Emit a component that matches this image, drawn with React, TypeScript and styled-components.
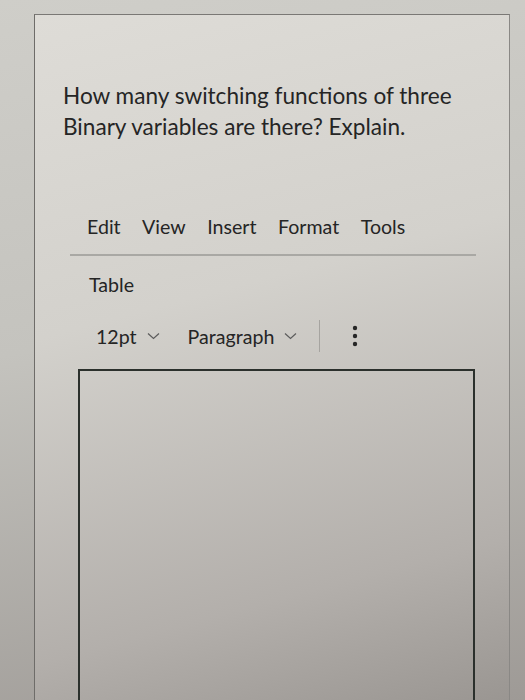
import styled, { createGlobalStyle } from 'styled-components';

const GlobalStyle = createGlobalStyle`
  html, body {
    margin: 0;
    padding: 0;
  }
  body {
    width: 525px;
    height: 700px;
    overflow: hidden;
    font-family: Lato, 'Open Sans', 'Liberation Sans', sans-serif;
    background: linear-gradient(170deg, #cfcec9 0%, #c4c3be 45%, #9e9a96 100%);
  }
`;

const menuItems = ['Edit', 'View', 'Insert', 'Format', 'Tools'];

const Chevron = () => (
  <svg width="13" height="8" viewBox="0 0 13 8" fill="none">
    <path d="M1 1.5l5.5 5L12 1.5" stroke="#5c5c5c" strokeWidth="1.2" />
  </svg>
);

const Kebab = () => (
  <svg width="6" height="22" viewBox="0 0 6 22">
    <circle cx="3" cy="3" r="2.2" fill="#262626" />
    <circle cx="3" cy="11" r="2.2" fill="#262626" />
    <circle cx="3" cy="19" r="2.2" fill="#262626" />
  </svg>
);

const App = () => {
  return (
    <>
      <GlobalStyle />
      <Page>
        <Card>
          {/* question */}
          <Question>
            How many switching functions of three
            <br />
            Binary variables are there? Explain.
          </Question>
          <Editor>
            <MenuBar>
              {menuItems.map(item => (
                <MenuItem key={item}>{item}</MenuItem>
              ))}
            </MenuBar>
            <ToolRow>
              <ToolLabel>Table</ToolLabel>
            </ToolRow>
            <ToolRow>
              <Dropdown>
                12pt <Chevron />
              </Dropdown>
              <Dropdown wide>
                Paragraph <Chevron />
              </Dropdown>
              <Separator />
              <MoreButton>
                <Kebab />
              </MoreButton>
            </ToolRow>
            <AnswerBox />
          </Editor>
        </Card>
      </Page>
    </>
  );
};

export default App;

const Page = styled.div`
  width: 525px;
  height: 700px;
  box-sizing: border-box;
  padding: 14px 15px 0 34px;
  overflow: hidden;
`;

const Card = styled.div`
  height: 100%;
  box-sizing: border-box;
  padding: 65px 0 0 28px;
  border-left: 1px solid #6e6c69;
  border-top: 1px solid #7a7875;
  border-right: 1px solid #8a8885;
  background: linear-gradient(165deg, #dedcd7 0%, #d3d1cc 40%, #b3afab 80%, #9a9692 100%);
`;

const Question = styled.p`
  margin: 0;
  font-size: 22.6px;
  line-height: 31px;
  color: #252525;
`;

const Editor = styled.div`
  margin: 73px 0 0 7px;
  width: 406px;
`;

const MenuBar = styled.ul`
  display: flex;
  gap: 21.5px;
  margin: 0;
  padding: 0 0 15px 17px;
  list-style: none;
  border-bottom: 2px solid #a9a8a4;
`;

const MenuItem = styled.li`
  font-size: 19.6px;
  line-height: 24px;
  color: #252525;
`;

const ToolRow = styled.div`
  display: flex;
  align-items: center;
  height: 52px;
  padding-left: 19px;
`;

const ToolLabel = styled.span`
  font-size: 19.6px;
  color: #252525;
  margin-top: 4px;
`;

const Dropdown = styled.div<{ wide?: boolean }>`
  display: flex;
  align-items: center;
  gap: 10px;
  margin: 4px 0 0 ${props => (props.wide ? '28px' : '7px')};
  font-size: 19.6px;
  color: #252525;
`;

const Separator = styled.div`
  width: 1px;
  height: 32px;
  margin: 4px 0 0 22px;
  background: #a6a4a0;
`;

const MoreButton = styled.div`
  display: flex;
  margin: 4px 0 0 32px;
`;

const AnswerBox = styled.div`
  margin: 9px 0 0 8px;
  width: 393px;
  height: 360px;
  border: 2px solid #2b302c;
  border-bottom: none;
`;
